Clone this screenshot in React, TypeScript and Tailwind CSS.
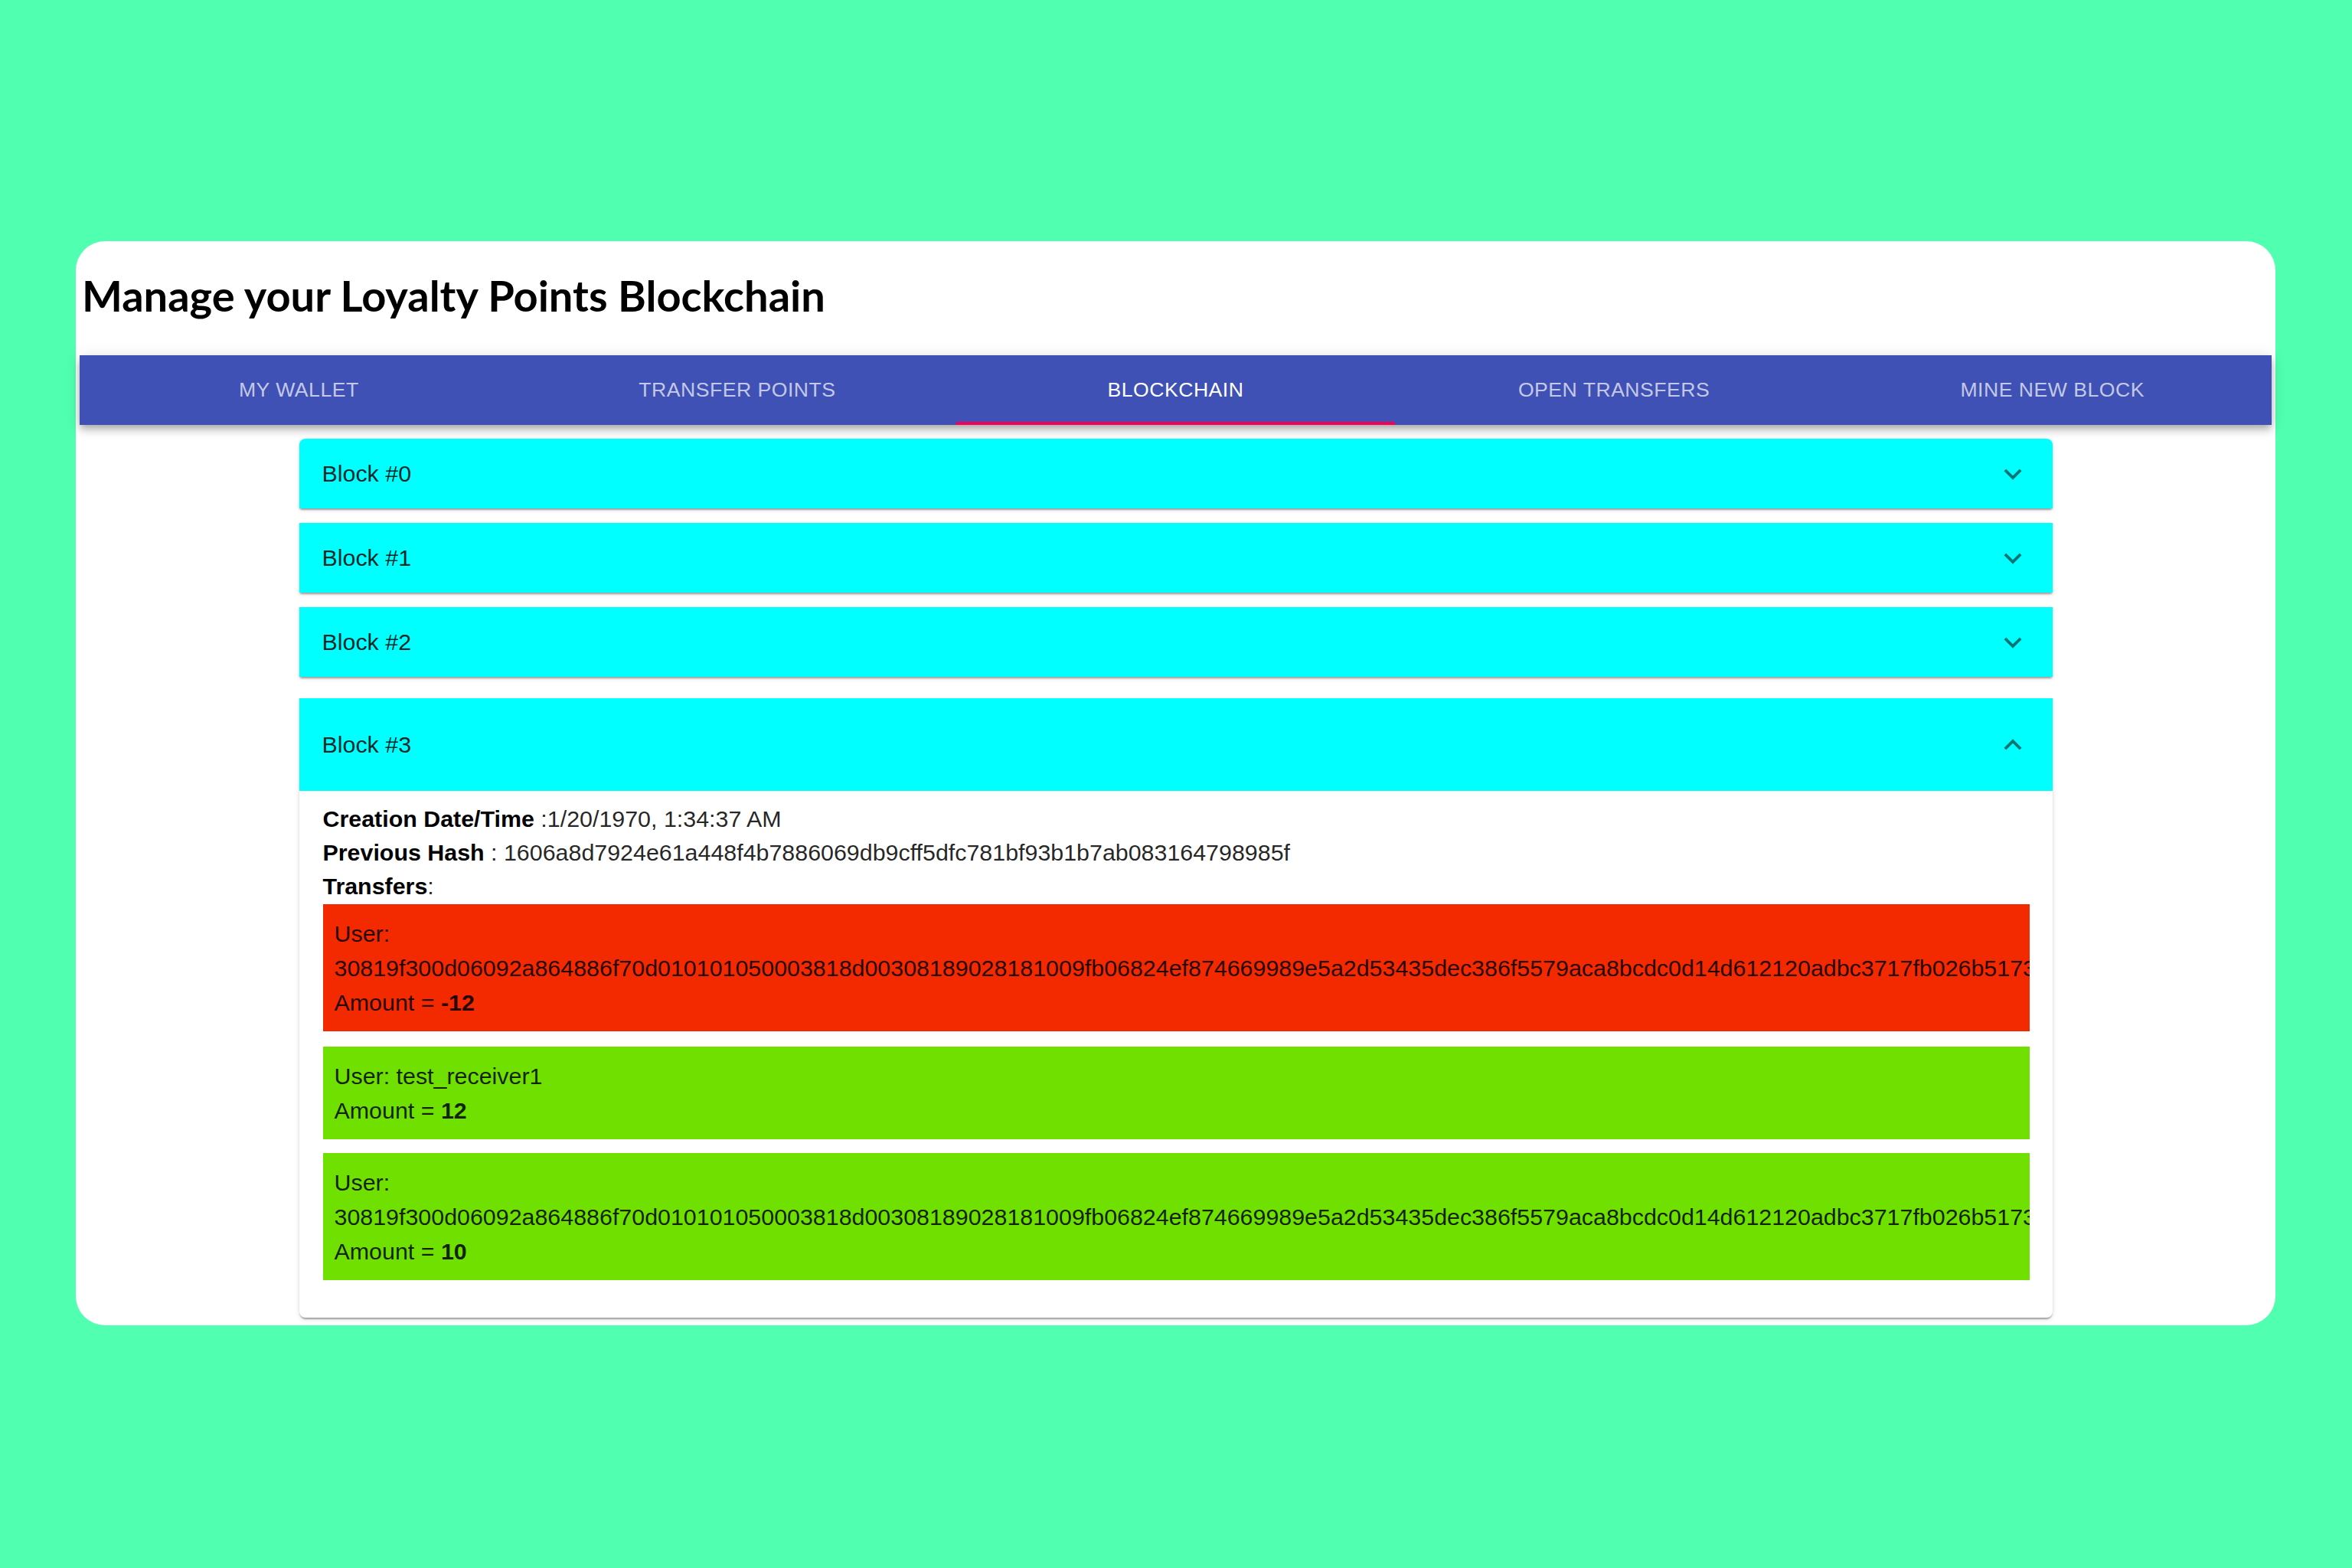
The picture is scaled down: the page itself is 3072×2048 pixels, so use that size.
import React from "react";

const USER_KEY =
  "30819f300d06092a864886f70d010101050003818d00308189028181009fb06824ef874669989e5a2d53435dec386f5579aca8bcdc0d14d612120adbc3717fb026b5173a4e8c9d0f1b2e7a6c5d4f3e2b1a0c9d8e7f6a5b4c3d2e1f0a9b8c7d60203010001";

function ChevronDown() {
  return (
    <svg viewBox="0 0 24 24" className="w-[46px] h-[46px]" fill="rgba(0,0,0,0.54)">
      <path d="M16.59 8.59 12 13.17 7.41 8.59 6 10l6 6 6-6z" />
    </svg>
  );
}

function ChevronUp() {
  return (
    <svg viewBox="0 0 24 24" className="w-[46px] h-[46px]" fill="rgba(0,0,0,0.54)">
      <path d="m12 8-6 6 1.41 1.41L12 10.83l4.59 4.58L18 14z" />
    </svg>
  );
}

const tabs = ["MY WALLET", "TRANSFER POINTS", "BLOCKCHAIN", "OPEN TRANSFERS", "MINE NEW BLOCK"];

const paperShadow =
  "shadow-[0_4px_2px_-2px_rgba(0,0,0,0.2),0_2px_2px_0_rgba(0,0,0,0.14),0_2px_6px_0_rgba(0,0,0,0.12)]";

function Collapsed({ label, extra }: { label: string; extra: string }) {
  return (
    <div
      className={`h-[91px] bg-[#00ffff] flex items-center justify-between pl-[30px] pr-[29px] shadow-[0_4px_2px_-2px_rgba(0,0,0,0.2),0_2px_2px_0_rgba(0,0,0,0.14),0_2px_6px_0_rgba(0,0,0,0.12)] ${extra}`}
    >
      <span className="text-[30.4px] text-black/[0.87]">{label}</span>
      <ChevronDown />
    </div>
  );
}

function Transfer({
  color,
  user,
  amount,
  extra,
}: {
  color: string;
  user: string;
  amount: string;
  extra?: string;
}) {
  return (
    <div
      className={`${color} pt-[16px] pb-[15px] px-[15px] leading-[45px] overflow-hidden text-black/[0.87] ${extra ?? ""}`}
    >
      <div>User: {user}</div>
      <div>
        Amount = <b className="font-bold">{amount}</b>
      </div>
    </div>
  );
}

export default function App() {
  return (
    <div className="w-[3072px] h-[2048px] bg-[#50ffb0] pt-[315px] pl-[99px] font-['Liberation_Sans',Arial,sans-serif]">
      <div className="w-[2873px] bg-white rounded-[38px] px-[5px] pb-[10px]">
        <h1 className="pt-[40px] pb-[47px] pl-[3px] leading-[62px] text-[56px] font-bold text-black font-['Lato',sans-serif]">
          Manage your Loyalty Points Blockchain
        </h1>

        <div className="h-[91px] bg-[#3f51b5] flex shadow-[0_4px_8px_-2px_rgba(0,0,0,0.2),0_8px_10px_0_rgba(0,0,0,0.14),0_2px_19px_0_rgba(0,0,0,0.12)] relative z-10">
          {tabs.map((t) => {
            const active = t === "BLOCKCHAIN";
            return (
              <div key={t} className="flex-1 relative flex items-center justify-center">
                <span
                  className={`text-[26.6px] tracking-[0.5px] ${active ? "text-white" : "text-white/70"}`}
                >
                  {t}
                </span>
                {active && (
                  <div className="absolute left-0 right-0 bottom-0 h-[4px] bg-[#f50057]" />
                )}
              </div>
            );
          })}
        </div>

        <div className="w-[2290px] mx-auto mt-[18px] flex flex-col">
          <Collapsed label="Block #0" extra="rounded-t-[8px] mb-[19px]" />
          <Collapsed label="Block #1" extra="mb-[19px]" />
          <Collapsed label="Block #2" extra="mb-[28px]" />

          <div className={`bg-white rounded-b-[8px] ${paperShadow}`}>
            <div className="h-[121px] bg-[#00ffff] flex items-center justify-between pl-[30px] pr-[29px]">
              <span className="text-[30.4px] text-black/[0.87]">Block #3</span>
              <ChevronUp />
            </div>
            <div className="pt-[14px] pl-[31px] pr-[30px] pb-[30px] text-[30.4px] text-black/[0.87]">
              <div className="leading-[44px]">
                <b className="font-bold text-black">Creation Date/Time</b> :1/20/1970, 1:34:37 AM
              </div>
              <div className="leading-[44px]">
                <b className="font-bold text-black">Previous Hash</b> :
                1606a8d7924e61a448f4b7886069db9cff5dfc781bf93b1b7ab083164798985f
              </div>
              <div className="leading-[44px]">
                <b className="font-bold text-black">Transfers</b>:
              </div>
              <Transfer color="bg-[#f32900]" user={USER_KEY} amount="-12" extra="mt-[2px] mb-[20px]" />
              <Transfer color="bg-[#70e000]" user="test_receiver1" amount="12" extra="mb-[18px]" />
              <Transfer color="bg-[#70e000]" user={USER_KEY} amount="10" extra="mb-[19px]" />
            </div>
          </div>
        </div>
      </div>
    </div>
  );
}
